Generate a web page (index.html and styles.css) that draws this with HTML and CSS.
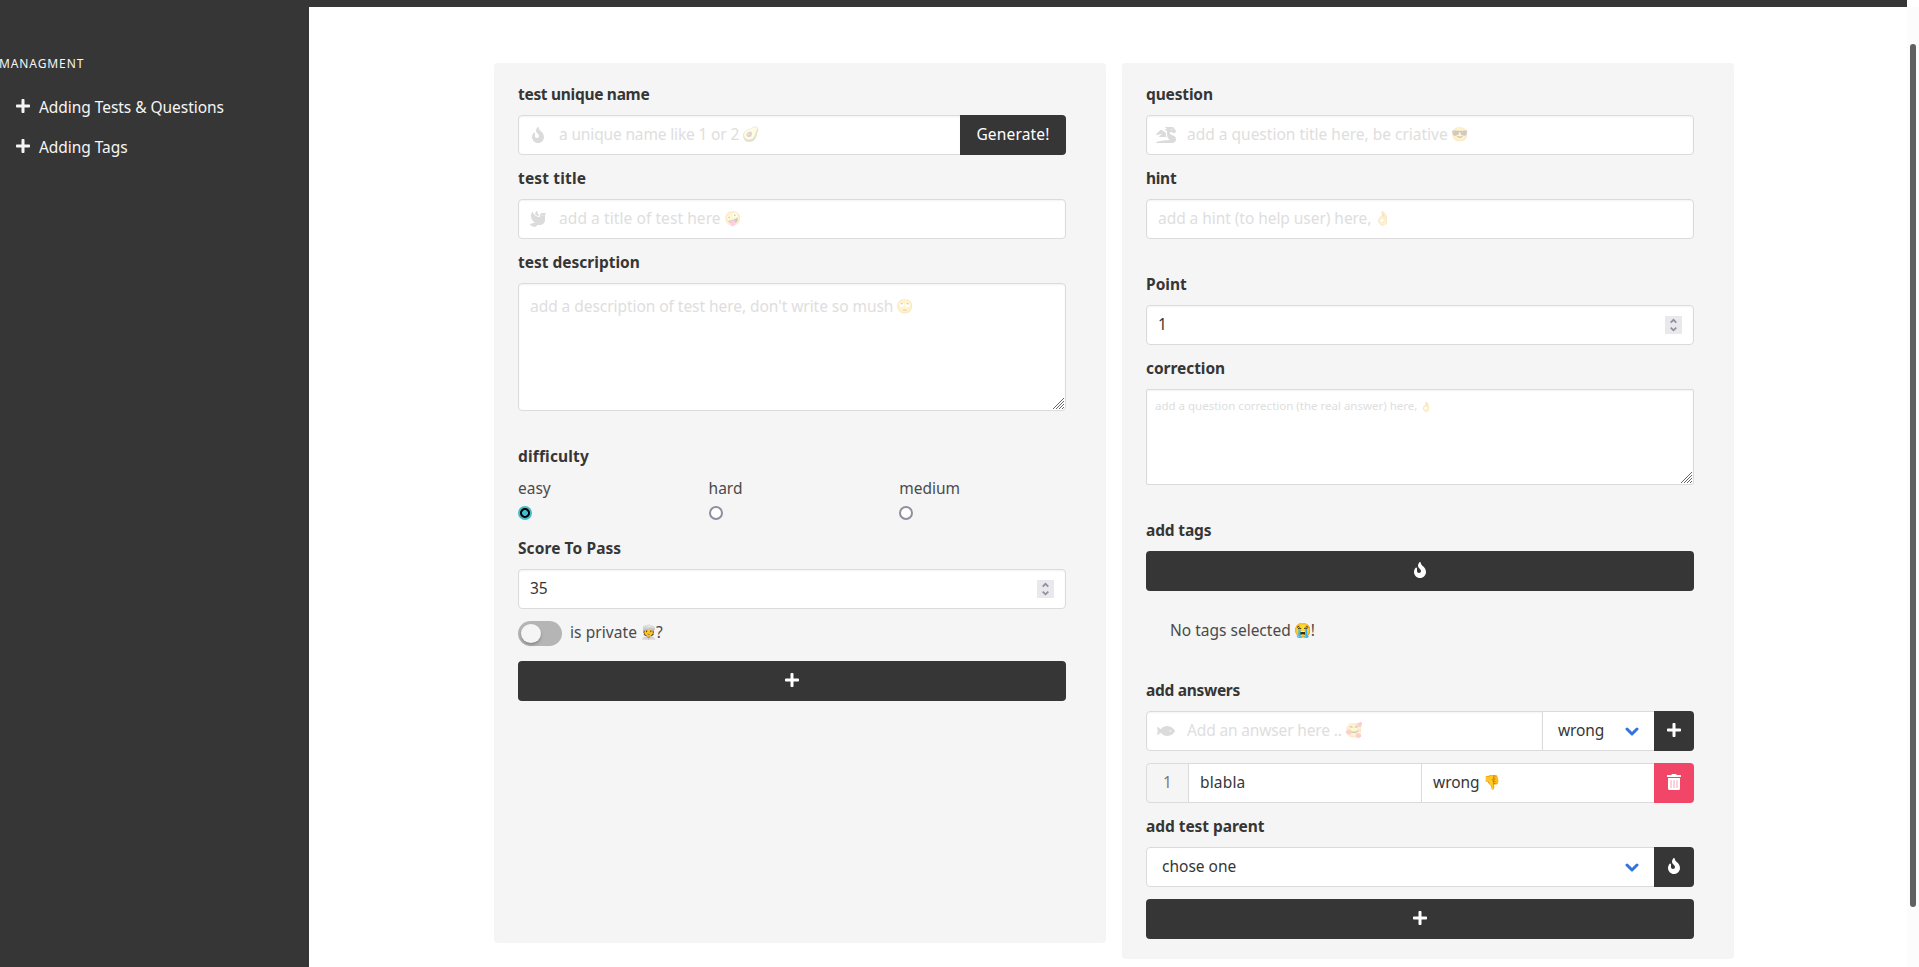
FILE: index.html
```html
<!DOCTYPE html>
<html lang="en">
<head>
<meta charset="utf-8">
<title>Managment</title>
<link rel="stylesheet" href="styles.css">
</head>
<body>
<svg width="0" height="0" class="sprite">
  <symbol id="fire" viewBox="0 0 384 512"><path d="M216 23.86c0-23.8-30.65-32.77-44.15-13.04C48 191.85 224 200 224 288c0 35.63-29.11 64.46-64.85 63.99-35.17-.45-63.15-29.77-63.15-64.94v-85.51c0-21.7-26.47-32.23-41.43-16.5C27.8 213.16 0 261.33 0 320c0 105.87 86.13 192 192 192s192-86.13 192-192c0-170.29-168-193-168-296.14z"/></symbol>
  <symbol id="dove" viewBox="0 0 512 512"><path d="M288 167.2v-28.1c-28.2-36.3-47.1-79.3-54.1-125.2-2.1-13.5-19-18.8-27.8-8.3-21.1 24.9-37.7 54.1-48.9 86.5 34.2 38.3 80 64.6 130.8 75.1zM400 64c-44.2 0-80 35.9-80 80.1v59.4C215.6 197.3 127 133 87 41.8c-5.5-12.5-23.2-13.2-29-.9C41.4 76 32 115.2 32 156.6c0 70.8 34.1 136.9 85.1 185.9 13.2 12.7 26.1 23.2 38.9 32.8l-143.9 36C1.4 414-3.4 426.4 2.6 435.7 20 462.6 63 508.2 155.8 512c8 .3 16-2.6 22.1-7.9l65.2-56.1H320c88.4 0 160-71.5 160-159.9V128l32-64H400zm0 96.1c-8.8 0-16-7.2-16-16s7.2-16 16-16 16 7.2 16 16-7.2 16-16 16z"/></symbol>
  <symbol id="dragon" viewBox="0 0 640 512"><path d="M18.32 255.78L192 223.96l-91.28 68.69c-10.08 10.08-2.94 27.31 11.31 27.31h222.7c-9.44-26.4-14.73-54.47-14.73-83.38v-42.27l-119.73-87.6c-23.82-15.88-55.29-14.01-77.06 4.59L5.81 227.64c-12.38 10.33-3.45 30.42 12.51 28.14zm556.87 34.1l-100.66-50.31A47.992 47.992 0 0 1 448 196.65v-36.69h64l28.09 22.63c6 6 14.14 9.37 22.63 9.37h30.97a32 32 0 0 0 28.62-17.69l14.31-28.62a32.005 32.005 0 0 0-3.02-33.51l-74.53-99.38C553.02 4.7 543.54 0 533.47 0H296.02c-7.13 0-10.7 8.57-5.66 13.61L352 63.96 292.42 88.8c-5.9 2.95-5.9 11.36 0 14.31L352 127.96v108.62c0 72.08 36.03 139.39 96 179.38-195.59 6.81-344.56 41.01-434.1 60.91C5.78 478.67 0 485.88 0 494.2 0 504 7.95 512 17.76 512h499.08c63.29.01 119.61-47.56 122.99-110.76 2.52-47.28-22.73-90.4-64.64-111.36zM489.18 66.25l45.65 11.41c-2.75 10.91-12.47 18.89-24.13 18.26-12.96-.71-25.85-12.53-21.52-29.67z"/></symbol>
  <symbol id="fish" viewBox="0 0 576 512"><path d="M327.1 96c-89.97 0-168.54 54.77-212.27 101.63L27.5 131.58c-12.13-9.18-30.24.6-27.14 14.66L24.54 256 .35 365.77c-3.1 14.06 15.01 23.83 27.14 14.66l87.33-66.05C158.55 361.23 237.13 416 327.1 416 464.56 416 576 288 576 256S464.56 96 327.1 96zm87.43 184c-13.25 0-24-10.75-24-24 0-13.26 10.75-24 24-24 13.26 0 24 10.74 24 24 0 13.25-10.75 24-24 24z"/></symbol>
  <symbol id="plus" viewBox="0 0 448 512"><path d="M416 208H272V64c0-17.67-14.33-32-32-32h-32c-17.67 0-32 14.33-32 32v144H32c-17.67 0-32 14.33-32 32v32c0 17.67 14.33 32 32 32h144v144c0 17.67 14.33 32 32 32h32c17.67 0 32-14.33 32-32V304h144c17.67 0 32-14.33 32-32v-32c0-17.67-14.33-32-32-32z"/></symbol>
  <symbol id="trash" viewBox="0 0 448 512"><path opacity=".5" d="M96 190h256v260H96z"/><path d="M32 464a48 48 0 0 0 48 48h288a48 48 0 0 0 48-48V128H32zm272-256a16 16 0 0 1 32 0v224a16 16 0 0 1-32 0zm-96 0a16 16 0 0 1 32 0v224a16 16 0 0 1-32 0zm-96 0a16 16 0 0 1 32 0v224a16 16 0 0 1-32 0zM432 32H312l-9.4-18.7A24 24 0 0 0 281.1 0H166.8a23.72 23.72 0 0 0-21.4 13.3L136 32H16A16 16 0 0 0 0 48v32a16 16 0 0 0 16 16h416a16 16 0 0 0 16-16V48a16 16 0 0 0-16-16z"/></symbol>
  <symbol id="chevron" viewBox="0 0 14 10"><path d="M2 2l5 5 5-5" fill="none" stroke="currentColor" stroke-width="3" stroke-linecap="round" stroke-linejoin="round"/></symbol>
  <symbol id="spin" viewBox="0 0 17 18"><path d="M0 0h17v18H0z" fill="#e9e9ed"/><path d="M5.7 6.6l2.8-2.8 2.8 2.8M5.7 11.6l2.8 2.8 2.8-2.8" fill="none" stroke="#8f8f9d" stroke-width="1.7"/></symbol>
  <symbol id="grip" viewBox="0 0 11 11"><path d="M0 11L11 0M3 11l8-8M6 11l5-5M9 11l2-2" fill="none" stroke="#666" stroke-width="1"/></symbol>
</svg>
<div class="topbar"></div>
<div class="layout">
  <aside class="sidebar">
    <p class="menu-label">MANAGMENT</p>
    <a class="menu-item"><svg class="i16"><use href="#plus"/></svg><span class="t">Adding Tests &amp; Questions</span></a>
    <a class="menu-item"><svg class="i16"><use href="#plus"/></svg><span class="t">Adding Tags</span></a>
  </aside>
  <main class="content">
    <section class="panel panel-test">
      <div class="label tighter">test unique name</div>
      <div class="row">
        <div class="input has-icon grow"><span class="icon"><svg class="fire"><use href="#fire"/></svg></span><span class="t ph tight">a unique name like 1 or 2</span><span class="emoji faded">🥑</span></div>
        <div class="btn generate loose">Generate!</div>
      </div>
      <div class="label loose">test title</div>
      <div class="input has-icon"><span class="icon"><svg class="i16"><use href="#dove"/></svg></span><span class="t ph wide">add a title of test here</span><span class="emoji faded">🤪</span></div>
      <div class="label">test description</div>
      <div class="input area area-test"><span class="t ph snug">add a description of test here, don't write so mush</span><span class="emoji faded">🙄</span><svg class="grip"><use href="#grip"/></svg></div>
      <div class="label gap-lg loose">difficulty</div>
      <div class="radios">
        <div class="option"><span class="t">easy</span><i class="radio checked"></i></div>
        <div class="option"><span class="t">hard</span><i class="radio"></i></div>
        <div class="option"><span class="t">medium</span><i class="radio"></i></div>
      </div>
      <div class="label score wide">Score To Pass</div>
      <div class="input number"><span class="t">35</span><svg class="spin"><use href="#spin"/></svg></div>
      <div class="switch-row"><span class="switch"><i></i></span><span class="t wide">is private</span><span class="emoji">👳</span><span>?</span></div>
      <div class="btn full"><svg class="i16"><use href="#plus"/></svg></div>
    </section>
    <section class="panel panel-question">
      <div class="label tight">question</div>
      <div class="input has-icon"><span class="icon"><svg class="i20"><use href="#dragon"/></svg></span><span class="t ph">add a question title here, be criative</span><span class="emoji faded">😎</span></div>
      <div class="label tighter">hint</div>
      <div class="input"><span class="t ph snug">add a hint (to help user) here,</span><span class="emoji faded">👌</span></div>
      <div class="label gap-md">Point</div>
      <div class="input number"><span class="t">1</span><svg class="spin"><use href="#spin"/></svg></div>
      <div class="label snug">correction</div>
      <div class="input area area-fix"><span class="t ph">add a question correction (the real answer) here,</span><span class="emoji faded">👌</span><svg class="grip"><use href="#grip"/></svg></div>
      <div class="label gap-md tight">add tags</div>
      <div class="btn"><svg class="fire"><use href="#fire"/></svg></div>
      <div class="no-tags"><span class="t">No tags selected</span><span class="emoji">😭</span><span>!</span></div>
      <div class="label answers tighter">add answers</div>
      <div class="row">
        <div class="input has-icon grow"><span class="icon"><svg class="i18"><use href="#fish"/></svg></span><span class="t ph tight">Add an anwser here ..</span><span class="emoji faded">🥰</span></div>
        <div class="input select verdict"><span class="t tight">wrong</span><svg class="chev"><use href="#chevron"/></svg></div>
        <div class="btn square"><svg class="i16"><use href="#plus"/></svg></div>
      </div>
      <div class="row second">
        <div class="input index"><span class="t">1</span></div>
        <div class="input cell"><span class="t loose">blabla</span></div>
        <div class="input cell"><span class="t snug">wrong</span><span class="emoji">👎</span></div>
        <div class="btn square danger"><svg class="i16"><use href="#trash"/></svg></div>
      </div>
      <div class="label snug">add test parent</div>
      <div class="row">
        <div class="input select grow"><span class="t">chose one</span><svg class="chev"><use href="#chevron"/></svg></div>
        <div class="btn square"><svg class="fire"><use href="#fire"/></svg></div>
      </div>
      <div class="btn full-last"><svg class="i16"><use href="#plus"/></svg></div>
    </section>
  </main>
  <div class="scrollbar"><i></i></div>
</div>
</body>
</html>
```
FILE: styles.css
```css
* { box-sizing: border-box; }
body {
  margin: 0;
  height: 967px;
  overflow: hidden;
  background: #fff;
  color: #4a4a4a;
  font: 15.5px/24px "Noto Sans", "Open Sans", sans-serif;
}
svg { display: block; fill: currentColor; flex: none; }
.sprite { position: absolute; }
.t { white-space: pre; }
.tighter { letter-spacing: -.3px; }
.tight { letter-spacing: -.15px; }
.snug { letter-spacing: -.05px; }
.wide { letter-spacing: .08px; }
.loose { letter-spacing: .17px; }
.topbar { height: 7px; margin-right: 12px; background: #363636; }
.layout { display: flex; height: 960px; }
.sidebar { width: 309px; background: #363636; color: #f5f5f5; padding-top: 45px; }
.menu-label { margin: 0 0 19px -1px; font-size: 12px; letter-spacing: .9px; height: 24px; }
.menu-item { display: flex; align-items: center; gap: 8px; height: 24px; margin-bottom: 16px; padding-left: 15px; letter-spacing: -.05px; }
.menu-item svg { margin-top: -3px; }
.content { flex: 1; display: flex; align-items: flex-start; gap: 16px; padding: 56px 0 0 185px; }
.panel { width: 612px; background: #f5f5f5; border-radius: 4px; padding: 20px 40px 0 24px; }
.panel-test { height: 880px; }
.panel-question { height: 896px; }
.label { height: 24px; margin: 12px 0 8px; color: #363636; font-weight: 700; line-height: 22px; }
.label:first-child { margin-top: 0; }
.label.gap-lg { margin-top: 33px; line-height: 24px; }
.label.gap-md { margin-top: 34px; }
.row { display: flex; }
.input {
  position: relative;
  display: flex;
  align-items: center;
  height: 40px;
  padding: 0 11px 2px;
  background: #fff;
  border: 1px solid #dbdbdb;
  border-radius: 4px;
  box-shadow: inset 0 1px 2px rgba(10, 10, 10, .05);
  color: #363636;
}
.row .input { border-radius: 0; margin-right: -1px; }
.row .input:first-child { border-radius: 4px 0 0 4px; }
.grow { flex: 1; }
.has-icon { padding-left: 0; }
.icon { width: 40px; height: 40px; display: flex; align-items: center; justify-content: center; color: #dbdbdb; padding: 2px 2px 0 0; }
.ph { color: #dedede; }
.emoji { font-size: 14px; margin-left: 3px; letter-spacing: 0; }
.faded { opacity: .25; }
.btn {
  position: relative;
  display: flex;
  align-items: center;
  justify-content: center;
  height: 40px;
  background: #363636;
  color: #fff;
  border-radius: 4px;
}
.row .btn { border-radius: 0 4px 4px 0; }
.btn svg { margin-top: -2px; }
.generate { width: 106px; padding-bottom: 2px; }
.square { width: 40px; }
.danger { background: #f14668; }
.area { align-items: flex-start; padding-top: 10px; }
.area-test { height: 128px; }
.area-fix { height: 96px; padding: 4px 8px; border-radius: 2px; font-size: 11.5px; }
.area-fix .emoji { font-size: 10px; }
.grip { position: absolute; right: 1px; bottom: 1px; width: 11px; height: 11px; }
.radios { display: grid; grid-template-columns: repeat(3, 190.6px); height: 46px; }
.option { display: flex; flex-direction: column; }
.radio { width: 14px; height: 14px; margin-top: 6px; border: 2px solid #8f8f9d; border-radius: 50%; background: #fff; }
.radio.checked { border-color: #44bccb; background: radial-gradient(circle, #44bccb 0 2.6px, #000 3.2px); }
.label.score { margin-top: 15px; }
.number { justify-content: space-between; }
.spin { width: 17px; height: 18px; margin-top: 1px; }
.switch-row { display: flex; height: 25px; margin-top: 12px; line-height: 22px; }
.switch { width: 44px; height: 25px; margin-right: 8px; padding: 3px; border-radius: 13px; background: #b5b5b5; }
.switch i { display: block; width: 20px; height: 19px; border-radius: 50%; background: #f5f5f5; box-shadow: 0 2px 3px rgba(0, 0, 0, .25); }
.switch-row .emoji { margin-right: -1px; }
.full { margin-top: 15px; }
.no-tags { display: flex; height: 88px; padding: 27px 24px 0; }
.label.answers { margin-top: 0; }
.verdict { width: 113px; }
.select { padding: 0 15px 2px 15px; justify-content: space-between; box-shadow: none; }
.chev { width: 14px; height: 10px; color: #3273dc; margin-top: 3px; }
.second { margin-top: 12px; }
.second .input { box-shadow: none; }
.row .index { width: 43px; justify-content: center; background: #f5f5f5; color: #7a7a7a; }
.cell { flex: 1; }
.full-last { margin-top: 12px; }
.i16 { width: 16px; height: 16px; }
.i18 { width: 18px; height: 16px; }
.i20 { width: 20px; height: 16px; }
.fire { width: 12px; height: 16px; }
.scrollbar { width: 12px; background: #fcfcfc; padding: 37px 3px; }
.scrollbar i { display: block; width: 6px; height: 863px; border-radius: 3px; background: #606060; }
```
